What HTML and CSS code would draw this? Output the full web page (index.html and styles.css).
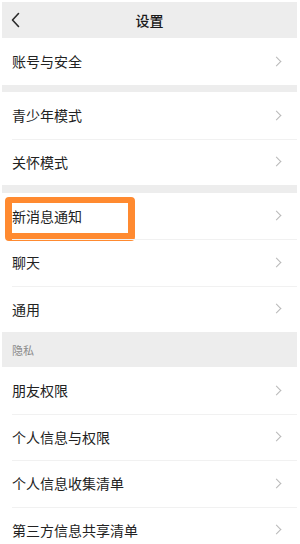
FILE: index.html
```html
<!DOCTYPE html>
<html lang="zh-CN">
<head>
<meta charset="utf-8">
<title>设置</title>
<link rel="stylesheet" href="styles.css">
</head>
<body>
<div class="screen">
  <header class="topbar">
    <span class="back">
      <svg width="9" height="16" viewBox="0 0 9 16"><path d="M7.5 1.5 L1.5 8 L7.5 14.5" fill="none" stroke="#2b2b2b" stroke-width="1.6" stroke-linecap="round" stroke-linejoin="round"/></svg>
    </span>
    <h1 class="title">设置</h1>
    <span></span>
  </header>

  <section class="group">
    <div class="row"><span>账号与安全</span><i class="chev"></i></div>
  </section>
  <div class="gap"></div>
  <section class="group">
    <div class="row"><span>青少年模式</span><i class="chev"></i></div>
    <div class="row"><span>关怀模式</span><i class="chev"></i></div>
  </section>
  <div class="gap"></div>
  <section class="group">
    <div class="row highlight-wrap"><span>新消息通知</span><i class="chev"></i><b class="highlight"></b></div>
    <div class="row"><span>聊天</span><i class="chev"></i></div>
    <div class="row"><span>通用</span><i class="chev"></i></div>
  </section>
  <div class="section-title">隐私</div>
  <section class="group">
    <div class="row"><span>朋友权限</span><i class="chev"></i></div>
    <div class="row"><span>个人信息与权限</span><i class="chev"></i></div>
    <div class="row"><span>个人信息收集清单</span><i class="chev"></i></div>
    <div class="row"><span>第三方信息共享清单</span><i class="chev"></i></div>
  </section>
</div>
</body>
</html>
```

FILE: styles.css
```css
* { box-sizing: border-box; margin: 0; padding: 0; }
html, body { background: #ffffff; }
body {
  width: 300px;
  height: 544px;
  overflow: hidden;
  padding: 2px 3px 0 2px;
  font-family: "Noto Sans CJK SC", "Noto Sans", sans-serif;
  color: #222222;
}
.screen { background: #ededed; min-height: 542px; }
.topbar {
  height: 36px;
  display: grid;
  grid-template-columns: 40px 1fr 40px;
  align-items: center;
  background: #ededed;
}
.back { display: flex; align-items: center; padding-left: 9px; }
.back svg { display: block; }
.title {
  text-align: center;
  font-size: 14px;
  font-weight: 500;
  color: #1a1a1a;
  line-height: 1;
}
.group { background: #ffffff; }
.row {
  position: relative;
  height: 46.5px;
  display: flex;
  align-items: center;
  justify-content: space-between;
  padding: 0 15px 0 10px;
  font-size: 14px;
  line-height: 1;
  color: #222222;
}
.row + .row::before {
  content: "";
  position: absolute;
  left: 10px;
  right: 0;
  top: 0;
  height: 1px;
  background: #f1f1f1;
}
.chev {
  width: 7px;
  height: 7px;
  border-top: 1.3px solid #b8b8b8;
  border-right: 1.3px solid #b8b8b8;
  transform: rotate(45deg);
  margin-right: 2px;
}
.gap { height: 7.5px; }
.section-title {
  height: 35px;
  display: flex;
  align-items: center;
  padding-left: 10px;
  font-size: 11px;
  color: #8a8a8a;
}
.highlight {
  position: absolute;
  left: 3px;
  top: 4px;
  width: 130px;
  height: 44px;
  border: 7px solid #ff8a30;
  border-top-width: 6px;
  border-bottom-width: 8px;
  border-radius: 4px;
}
```
